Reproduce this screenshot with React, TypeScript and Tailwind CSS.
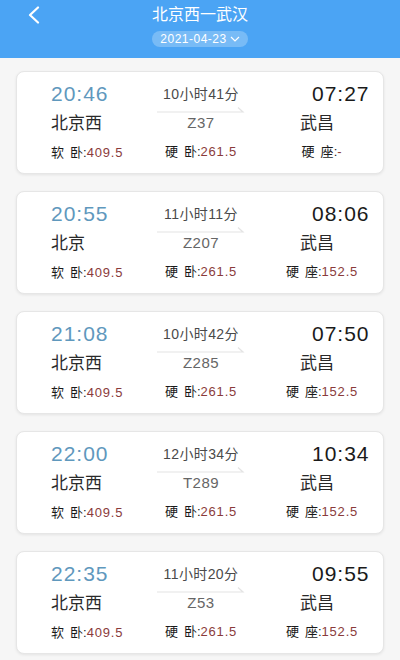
import React from "react";

type Train = {
  dep: string;
  arr: string;
  duration: string;
  from: string;
  to: string;
  code: string;
  soft: string;
  hard: string;
  seat: string;
};

const trains: Train[] = [
  { dep: "20:46", arr: "07:27", duration: "10小时41分", from: "北京西", to: "武昌", code: "Z37", soft: "409.5", hard: "261.5", seat: "-" },
  { dep: "20:55", arr: "08:06", duration: "11小时11分", from: "北京", to: "武昌", code: "Z207", soft: "409.5", hard: "261.5", seat: "152.5" },
  { dep: "21:08", arr: "07:50", duration: "10小时42分", from: "北京西", to: "武昌", code: "Z285", soft: "409.5", hard: "261.5", seat: "152.5" },
  { dep: "22:00", arr: "10:34", duration: "12小时34分", from: "北京西", to: "武昌", code: "T289", soft: "409.5", hard: "261.5", seat: "152.5" },
  { dep: "22:35", arr: "09:55", duration: "11小时20分", from: "北京西", to: "武昌", code: "Z53", soft: "409.5", hard: "261.5", seat: "152.5" }
];

function Price({ a, b, value }: { a: string; b: string; value: string }) {
  return (
    <span className="whitespace-nowrap text-[13px] leading-[24px] text-[#1a1a1a]">
      <span>{a}</span>
      <span className="ml-[6px]">{b}</span>
      <span>:</span>
      <span className="tracking-[0.8px] text-[#8a3b3b]">{value}</span>
    </span>
  );
}

function TrainCard({ t }: { t: Train }) {
  return (
    <div className="flex h-[103px] flex-col rounded-[8px] border border-[#e6e6e6] bg-white pt-[11px] shadow-[0_1px_3px_rgba(0,0,0,0.08)]">
      <div className="flex h-[28px] items-start">
        <div className="w-[134px] pl-[34px] text-[21px] leading-[22px] tracking-[1px] text-[#5f98bd]">
          {t.dep}
        </div>
        <div className="flex w-[100px] flex-col items-center">
          <span className="text-[14px] leading-[22px] tracking-[0.4px] text-[#4a4a4a]">{t.duration}</span>
          <svg width="88" height="7" viewBox="0 0 88 7" className="mt-[1px]">
            <path d="M0 6 H86 L81 1.5" fill="none" stroke="#e4e4e4" strokeWidth="1.2" />
          </svg>
        </div>
        <div className="flex-1 pl-[61px] text-[21px] leading-[22px] tracking-[1px] text-[#1a1a1a]">
          {t.arr}
        </div>
      </div>
      <div className="flex h-[25px] items-center">
        <div className="w-[134px] pl-[34px] text-[17px] text-[#2a2a2a]">{t.from}</div>
        <div className="w-[100px] text-center text-[15px] tracking-[0.5px] text-[#666]">{t.code}</div>
        <div className="flex-1 pl-[49px] text-[17px] text-[#2a2a2a]">{t.to}</div>
      </div>
      <div className="mt-[4px] flex h-[24px] items-center">
        <div className="w-[134px] pl-[34px]">
          <Price a="软" b="卧" value={t.soft} />
        </div>
        <div className="flex w-[100px] justify-center">
          <Price a="硬" b="卧" value={t.hard} />
        </div>
        <div className="flex flex-1 justify-center pl-[10px]">
          <Price a="硬" b="座" value={t.seat} />
        </div>
      </div>
    </div>
  );
}

export default function App() {
  return (
    <div
      className="min-h-[660px] w-[400px] bg-[#f6f6f6]"
      style={{ fontFamily: '"Liberation Sans", "Noto Sans CJK SC", sans-serif' }}
    >
      <header className="relative flex h-[58px] flex-col items-center bg-[#4ba4f4] pt-[5px]">
        <svg width="14" height="18" viewBox="0 0 14 18" className="absolute left-[27px] top-[6px]">
          <path d="M11 1.5 L3 9 L11 16.5" fill="none" stroke="white" strokeWidth="2.2" strokeLinecap="round" strokeLinejoin="round" />
        </svg>
        <div className="text-[16px] leading-[20px] text-white">北京西一武汉</div>
        <div className="mt-[6px] flex h-[16px] items-center gap-[3px] rounded-full bg-[#8cc4f6]/70 px-[8px] text-[12px] tracking-[0.5px] text-white">
          <span>2021-04-23</span>
          <svg width="10" height="6" viewBox="0 0 10 6">
            <path d="M1 1 L5 5 L9 1" fill="none" stroke="white" strokeWidth="1.2" />
          </svg>
        </div>
      </header>
      <div className="flex flex-col gap-[17px] px-[16px] pt-[13px] pb-[10px]">
        {trains.map((t) => (
          <TrainCard key={t.code} t={t} />
        ))}
      </div>
    </div>
  );
}
